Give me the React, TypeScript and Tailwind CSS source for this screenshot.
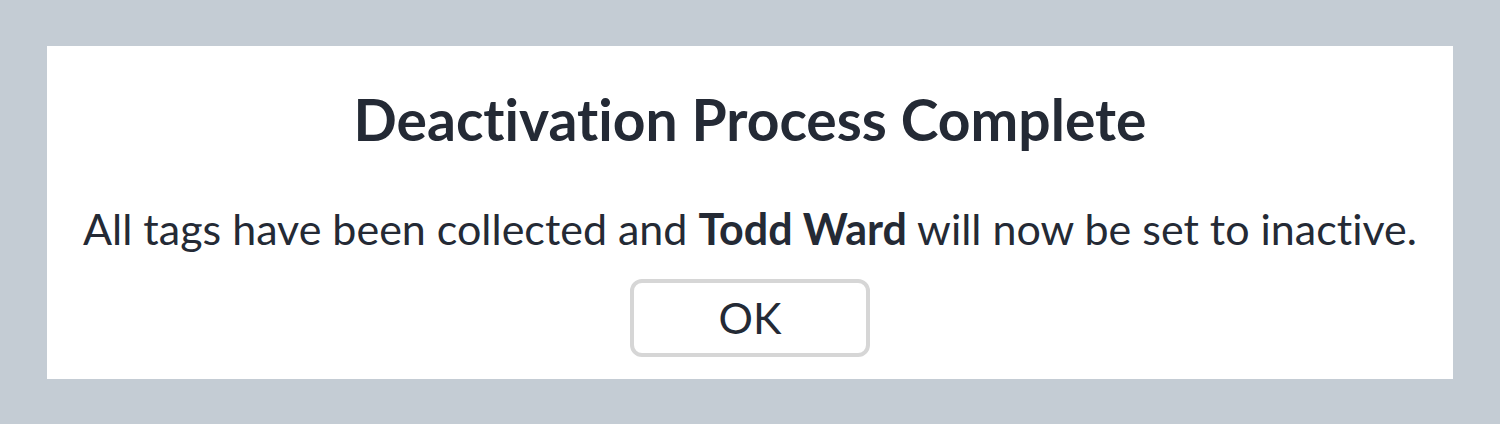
import React from "react";

const App: React.FC = () => {
  return (
    <div
      className="w-full h-[424px] bg-[#c4ccd4] pt-[46px] px-[47px] [font-variant-ligatures:none]"
      style={{ fontFamily: "Lato, 'Open Sans', sans-serif" }}
    >
      <div className="bg-white h-[333px] flex flex-col items-center text-[#242a35]">
        <h2 className="mt-[40px] text-[57px] leading-[67px] font-bold">
          Deactivation Process Complete
        </h2>
        <p className="mt-[50px] text-[43px] leading-[52px] whitespace-nowrap">
          All tags have been collected and <b>Todd Ward</b> will now be set to inactive.
        </p>
        <button className="mt-[24px] w-[240px] h-[78px] border-4 border-[#d6d6d6] rounded-xl text-[43px] text-[#242a35]">
          OK
        </button>
      </div>
    </div>
  );
};

export default App;
